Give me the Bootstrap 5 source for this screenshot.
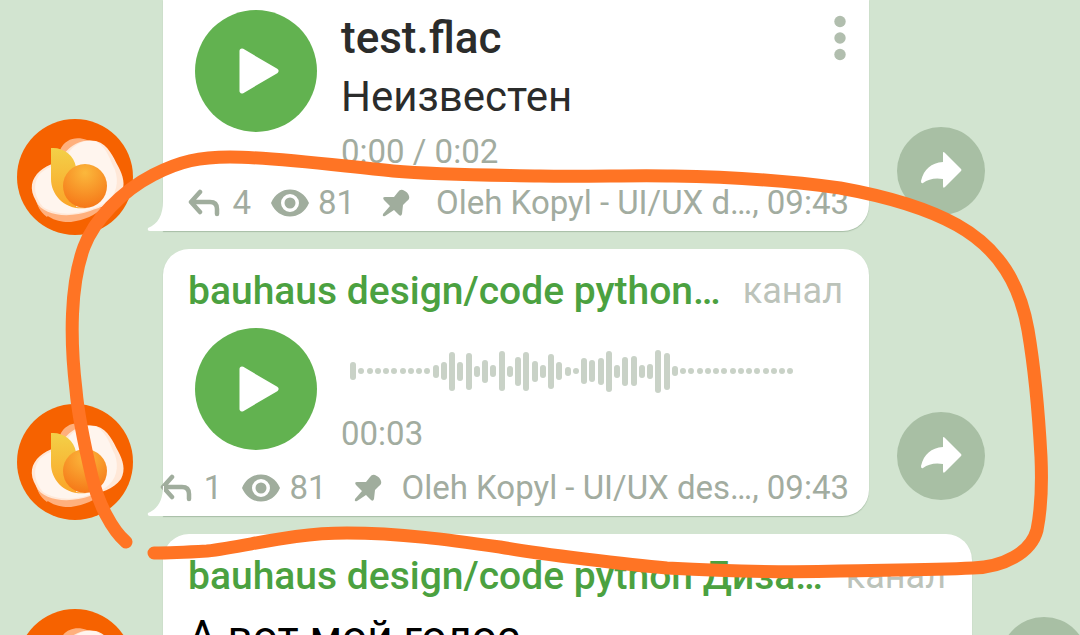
<!DOCTYPE html>
<html lang="ru">
<head>
<meta charset="utf-8">
<meta name="viewport" content="width=device-width, initial-scale=1">
<title>bauhaus design/code python</title>
<link href="https://cdn.jsdelivr.net/npm/bootstrap@5.3.0/dist/css/bootstrap.min.css" rel="stylesheet">
<style>
body { background: #d2e4d0; font-family: Roboto, "Noto Sans", sans-serif; color: #2b2c2b; }
.chat { gap: 18px; height: 100vh; }
.msg { padding-left: 17px; }
.avatar { width: 116px; height: 116px; margin: 0 30px -4px 0; }
.bubble { width: calc(100% - 357px); padding: 18px 20px 8px 25px; border-radius: 26px 26px 26px 0; box-shadow: 0 1px 1px rgba(90, 120, 90, .35); }
.bubble-first { padding-top: 10px; border-top-left-radius: 0; border-top-right-radius: 0; }
.bubble-wide { width: calc(100% - 254px); height: 187px; }
.tail { left: -16px; bottom: 0; width: 17px; height: 30px; }
.share { width: 88px; height: 88px; margin: 0 0 16px 28px; background: #a8bfa4; }
.play { width: 122px; height: 122px; margin: 0 24px 0 7px; background: #62b250; }
.line-lg { font-size: 42px; line-height: 48px; }
.line-track { font-size: 44px; line-height: 48px; }
.line-name { font-size: 39px; line-height: 48px; color: #4ba140; }
.line-sm { font-size: 33px; line-height: 40px; color: #a2aca0; }
.role { font-size: 36px; line-height: 48px; color: #bcc3ba; margin-right: 6px; }
.fw-medium { font-weight: 500; }
.track { padding-top: 4px; }
.track-artist { margin: 11px 0; }
.more { margin: 5px 3px 0 0; }
.meta-row { margin-top: 11px; }
.meta-voice { margin-top: 14px; }
.voice { margin-top: 13px; }
.wave { width: 444px; height: 44px; margin: 21px 0 21px 9px; }
.wave span { width: 6px; border-radius: 3px; background: #c9d2c7; }
.post { font-size: 44px; line-height: 48px; color: #000; margin-top: 13px; }
.ico-reply { margin-right: 12px; }
.ico-eye { margin: 0 9px 0 20px; }
.ico-pin { margin: 0 20px 0 27px; }
.byline-short { padding-left: 6px; }
.mark-up { pointer-events: none; }
</style>
</head>
<body class="overflow-hidden">
<svg class="position-absolute" width="0" height="0" aria-hidden="true">
  <defs>
    <linearGradient id="leaf" x1="0" y1="0" x2="0" y2="1"><stop offset="0" stop-color="#f3d048"/><stop offset="1" stop-color="#fba428"/></linearGradient>
    <radialGradient id="yolk" cx=".5" cy=".2" r=".85"><stop offset="0" stop-color="#fbb83c"/><stop offset="1" stop-color="#f57416"/></radialGradient>
    <g id="egg">
      <circle cx="58" cy="58" r="58" fill="#f66200"/>
      <path d="M43 31C48 20 59 17 70 21L85 25L30 98C22 92 20 86 20 80C30 60 35 45 43 31Z" fill="#ffb07d"/>
      <path d="M19 82C24 97 40 104 54 103C68 101 78 96 86 89L40 80Z" fill="#ffb07d"/>
      <path d="M46 36C56 23 68 20 79 22C92 26 96 38 101 47C106 56 109 66 104 75C96 86 83 88 73 92C54 99 26 98 19 82C12 70 14 60 23 52C32 44 40 46 46 36Z" fill="#ffe8d8"/>
      <path d="M50 36C59 22 71 20 80 23C90 29 93 41 98 51C102 63 100 76 88 84C70 94 46 100 26 88C18 79 15 66 22 56C31 46 42 48 50 36Z" fill="#fff5ee"/>
      <path d="M34 29C46 28 57 36 59 48V88L70 89C48 92 34 76 34 60Z" fill="url(#leaf)"/>
      <circle cx="68" cy="67" r="22" fill="url(#yolk)"/>
    </g>
  </defs>
</svg>
<main class="chat d-flex flex-column position-relative overflow-hidden">

  <article class="msg d-flex align-items-end flex-shrink-0">
    <svg class="avatar flex-shrink-0" viewBox="0 0 116 116" role="img" aria-label="bauhaus"><use href="#egg"/></svg>
    <div class="bubble bubble-first bg-white position-relative flex-shrink-0">
      <svg class="tail position-absolute" viewBox="0 0 17 30" aria-hidden="true"><path d="M17 0H16C16 14 11 23 1 27Q0 30 3 30H17Z" fill="#fff"/></svg>
      <div class="d-flex align-items-start">
        <button type="button" class="play btn rounded-circle border-0 p-0 flex-shrink-0" aria-label="Play"><svg class="d-block" width="122" height="122" viewBox="0 0 122 122"><path d="M47 41L81 61L47 81Z" fill="#fff" stroke="#fff" stroke-width="5" stroke-linejoin="round"/></svg></button>
        <div class="track flex-grow-1 text-nowrap">
          <div class="line-track fw-medium">test.flac</div>
          <div class="track-artist line-lg">Неизвестен</div>
          <div class="line-sm">0:00 / 0:02</div>
        </div>
        <button type="button" class="more btn border-0 p-0 lh-1" aria-label="More"><svg width="12" height="46" viewBox="0 0 12 46" fill="#b1beae"><circle cx="6" cy="6.500" r="5.700"/><circle cx="6" cy="23" r="5.700"/><circle cx="6" cy="39.500" r="5.700"/></svg></button>
      </div>
      <div class="meta-row line-sm d-flex align-items-center justify-content-end text-nowrap">
        <svg class="ico-reply flex-shrink-0" width="32" height="28" viewBox="0 0 32 28" fill="none" stroke="#a0ad9d" stroke-width="4.500" stroke-linecap="round" stroke-linejoin="round"><path id="reply" d="M12 3L3 13L12 23M3 13H22Q29 13 29 20V25"/></svg>
        <span>4</span>
        <svg class="ico-eye flex-shrink-0" width="38" height="28" viewBox="0 0 38 28"><path id="eye" fill="#a0ad9d" fill-rule="evenodd" d="M0 14C4 5 11 .5 19 .5S34 5 38 14C34 23 27 27.500 19 27.500S4 23 0 14ZM19 5A9 9 0 1 0 19 23A9 9 0 1 0 19 5ZM19 8.500A5.500 5.500 0 1 1 19 19.500A5.500 5.500 0 1 1 19 8.500Z"/></svg>
        <span>81</span>
        <svg class="ico-pin flex-shrink-0" width="28" height="28" viewBox="0 0 28 28"><path id="pin" fill="#a0ad9d" d="M16 3Q18 0 21 1Q26 3 27 7Q28 10 25 12L21 16L20 25Q19 28 17 26L12 21L3 27Q0 28 1 25L8 17L2 11Q0 8 3 8L12 8Z"/></svg>
        <span class="byline-short">Oleh Kopyl - UI/UX d…, 09:43</span>
      </div>
    </div>
    <button type="button" class="share btn rounded-circle border-0 p-0 flex-shrink-0" aria-label="Share"><svg class="d-block" width="88" height="88" viewBox="0 0 88 88"><path id="forward" fill="#fff" d="M46 26Q46 24 48 26L64 42Q65 43 64 44L48 60Q46 62 46 59V52Q34 50 26 56Q24 57 24 54C27 42 34 36 46 35Z"/></svg></button>
  </article>

  <article class="msg d-flex align-items-end flex-shrink-0">
    <svg class="avatar flex-shrink-0" viewBox="0 0 116 116" role="img" aria-label="bauhaus"><use href="#egg"/></svg>
    <div class="bubble bg-white position-relative flex-shrink-0">
      <svg class="tail position-absolute" viewBox="0 0 17 30" aria-hidden="true"><path d="M17 0H16C16 14 11 23 1 27Q0 30 3 30H17Z" fill="#fff"/></svg>
      <div class="d-flex justify-content-between text-nowrap">
        <a href="#" class="line-name fw-medium text-decoration-none">bauhaus design/code python…</a><span class="role">канал</span>
      </div>
      <div class="d-flex align-items-start voice">
        <button type="button" class="play btn rounded-circle border-0 p-0 flex-shrink-0" aria-label="Play"><svg class="d-block" width="122" height="122" viewBox="0 0 122 122"><path d="M47 41L81 61L47 81Z" fill="#fff" stroke="#fff" stroke-width="5" stroke-linejoin="round"/></svg></button>
        <div>
          <div class="wave d-flex align-items-center justify-content-between" id="wave"></div>
          <div class="line-sm">00:03</div>
        </div>
      </div>
      <div class="meta-voice line-sm d-flex align-items-center justify-content-end text-nowrap">
        <svg class="ico-reply flex-shrink-0" width="32" height="28" viewBox="0 0 32 28" fill="none" stroke="#a0ad9d" stroke-width="4.500" stroke-linecap="round" stroke-linejoin="round"><use href="#reply"/></svg>
        <span>1</span>
        <svg class="ico-eye flex-shrink-0" width="38" height="28" viewBox="0 0 38 28"><use href="#eye"/></svg>
        <span>81</span>
        <svg class="ico-pin flex-shrink-0" width="28" height="28" viewBox="0 0 28 28"><use href="#pin"/></svg>
        <span>Oleh Kopyl - UI/UX des…, 09:43</span>
      </div>
    </div>
    <button type="button" class="share btn rounded-circle border-0 p-0 flex-shrink-0" aria-label="Share"><svg class="d-block" width="88" height="88" viewBox="0 0 88 88"><use href="#forward"/></svg></button>
  </article>

  <article class="msg d-flex align-items-end flex-shrink-0">
    <svg class="avatar flex-shrink-0" viewBox="0 0 116 116" role="img" aria-label="bauhaus"><use href="#egg"/></svg>
    <div class="bubble bubble-wide bg-white position-relative flex-shrink-0">
      <div class="d-flex justify-content-between text-nowrap">
        <a href="#" class="line-name fw-medium text-decoration-none">bauhaus design/code python Диза…</a><span class="role">канал</span>
      </div>
      <div class="post">А вот мой голос</div>
    </div>
    <button type="button" class="share btn rounded-circle border-0 p-0 flex-shrink-0" aria-label="Share"><svg class="d-block" width="88" height="88" viewBox="0 0 88 88"><use href="#forward"/></svg></button>
  </article>

  <svg class="mark-up position-absolute top-0 start-0 w-100" viewBox="0 0 1080 635" fill="none" stroke="#ff7424" stroke-width="13" stroke-linecap="round" stroke-linejoin="round" aria-hidden="true">
    <path d="M126 542C112 530 98 503 92 477C84 443 78 415 76 390C70 340 70 285 84 247C94 220 122 191 153 175C180 161 200 157 230 157C275 157 340 166 393 171C440 175 490 175 540 176C590 177 630 175 673 176C740 177 790 181 840 188C890 197 930 210 957 225C1000 249 1020 285 1028 330C1034 365 1039 420 1041 457C1042 480 1042 505 1037 530C1031 553 1003 567 973 568C930 570 885 570 840 571C780 573 725 571 667 568C630 565 540 554 500 547C450 540 400 533 347 533C290 533 250 546 207 551C190 552 170 553 154 553"/>
  </svg>
</main>
<script>
const levels = [18, 6, 6, 6, 6, 6, 6, 6, 6, 6, 13, 18, 39, 19, 37, 11, 23, 12, 40, 11, 29, 39, 21, 13, 35, 18, 9, 6,
  26, 22, 27, 41, 13, 29, 30, 13, 15, 43, 37, 10, 6, 6, 6, 6, 6, 6, 6, 6, 6, 6, 6, 6, 6, 6];
document.getElementById('wave').innerHTML = levels.map(h => `<span style="height:${h}px"></span>`).join('');
</script>
<script src="https://cdn.jsdelivr.net/npm/bootstrap@5.3.0/dist/js/bootstrap.bundle.min.js"></script>
</body>
</html>
